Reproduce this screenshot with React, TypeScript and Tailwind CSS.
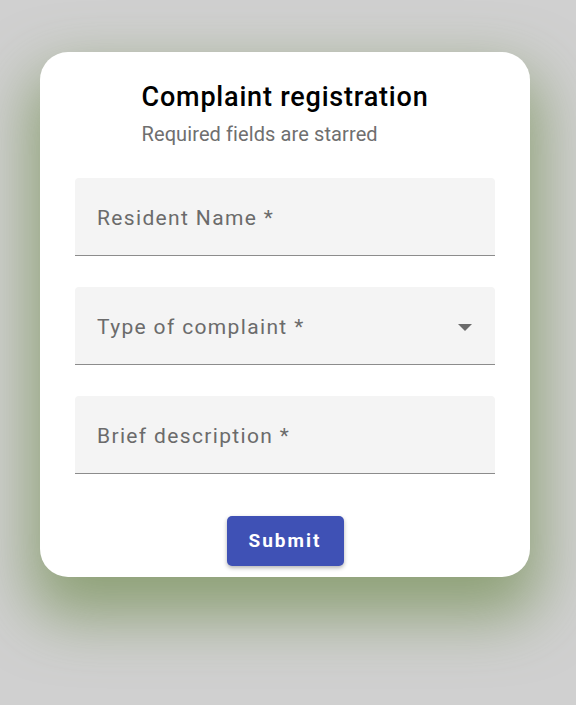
import React from 'react';

const Field: React.FC<{ label: string; select?: boolean }> = ({ label, select }) => (
  <div className="flex h-[78px] items-center justify-between rounded-t-[4px] border-b border-[#8c8c8c] bg-[#f4f4f4] pt-[4px] pl-[22px] pr-[22px]">
    <span className="text-[21px] tracking-[1.35px] text-[#6b6b6b]">{label}</span>
    {select && (
      <svg width="14" height="8" viewBox="0 0 14 8" className="mr-[1px]">
        <path d="M0 0 L14 0 L7 7 Z" fill="#6b6b6b" />
      </svg>
    )}
  </div>
);

export default function App() {
  return (
    <div
      className="min-h-[705px] w-full bg-[#d0d0d0] pt-[52px] pl-[40px]"
      style={{ fontFamily: 'Roboto, "Liberation Sans", sans-serif' }}
    >
      <div className="w-[490px] rounded-[28px] bg-white px-[35px] pt-[27px] pb-[11px] shadow-[0_30px_60px_10px_rgba(120,145,90,0.75)]">
        <div className="flex justify-center">
          <div>
            <h1 className="text-[27px] font-medium leading-[36px] tracking-[0.8px] text-black">Complaint registration</h1>
            <p className="mt-[7px] text-[20px] leading-[24px] tracking-[0.1px] text-[#6f6f6f]">Required fields are starred</p>
          </div>
        </div>
        <div className="mt-[32px] flex flex-col gap-[31px]">
          <Field label="Resident Name *" />
          <Field label="Type of complaint *" select />
          <Field label="Brief description *" />
        </div>
        <div className="mt-[42px] flex justify-center">
          <button className="h-[50px] w-[117px] rounded-[5px] bg-[#3f51b5] text-[19px] font-bold tracking-[2px] text-white shadow-[0_2px_4px_rgba(0,0,0,0.3)]">
            Submit
          </button>
        </div>
      </div>
    </div>
  );
}
